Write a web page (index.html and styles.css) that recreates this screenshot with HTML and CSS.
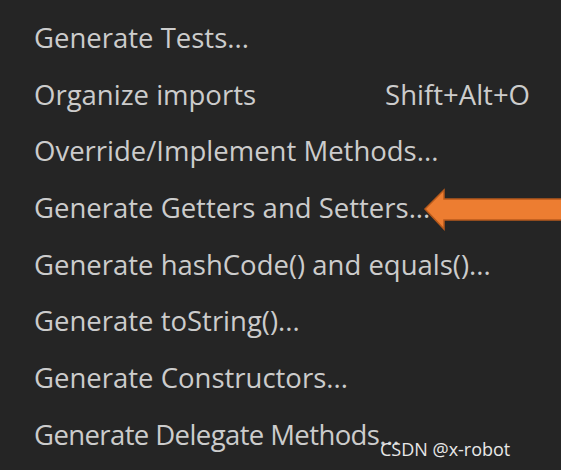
FILE: index.html
```html
<!DOCTYPE html>
<html>
<head>
<meta charset="utf-8">
<link rel="stylesheet" href="styles.css">
</head>
<body>
<div class="menu">
  <div class="item"><span>Generate Tests...</span></div>
  <div class="item"><span>Organize imports</span><span class="key">Shift+Alt+O</span></div>
  <div class="item"><span>Override/Implement Methods...</span></div>
  <div class="item"><span>Generate Getters and Setters...</span></div>
  <div class="item"><span>Generate hashCode() and equals()...</span></div>
  <div class="item"><span>Generate toString()...</span></div>
  <div class="item"><span>Generate Constructors...</span></div>
  <div class="item"><span class="tight">Generate Delegate Methods...</span></div>
</div>
<svg class="arrow" width="140" height="44" viewBox="0 0 140 44">
  <polygon points="2,21 21,2 21,11 140,11 140,32 21,32 21,41" fill="#ed7d31" stroke="#b85a1c" stroke-width="1.5" stroke-linejoin="miter"/>
</svg>
<div class="watermark">CSDN @x-robot</div>
</body>
</html>
```
FILE: styles.css
```css
html, body {
  margin: 0;
  padding: 0;
  background: #252525;
  width: 561px;
  height: 470px;
  overflow: hidden;
}
body {
  position: relative;
  font-family: "Open Sans", "Noto Sans", sans-serif;
  color: #cccccc;
}
.menu {
  display: flex;
  flex-direction: column;
  padding: 9px 31px 0 34px;
}
.item {
  display: flex;
  justify-content: space-between;
  align-items: center;
  height: 56.7px;
  font-size: 27.5px;
  white-space: nowrap;
}
.tight {
  letter-spacing: -0.6px;
}
.arrow {
  position: absolute;
  left: 423px;
  top: 188px;
}
.watermark {
  position: absolute;
  left: 380px;
  top: 437px;
  font-size: 18px;
  color: #e8e8e8;
  font-family: "Open Sans", "Noto Sans", sans-serif;
}
```
